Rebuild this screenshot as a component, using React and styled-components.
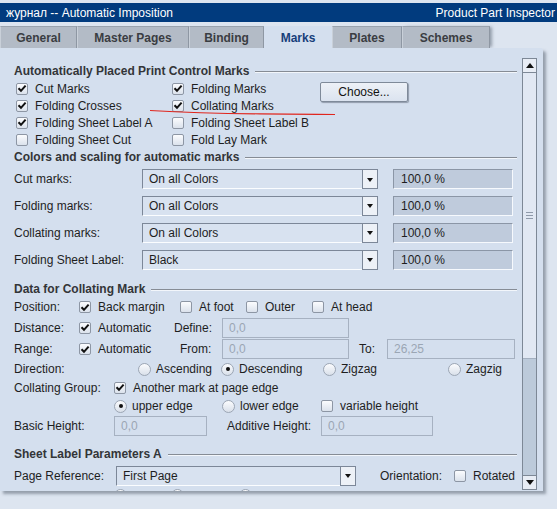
import React from "react";
import styled, { createGlobalStyle } from "styled-components";

const Global = createGlobalStyle`
  html, body { margin: 0; padding: 0; }
  body {
    width: 557px; height: 509px; overflow: hidden;
    background: #dde5f0;
    font-family: "Liberation Sans", Arial, sans-serif;
    font-size: 12px; color: #1e1e1e;
  }
`;

const Frame = styled.div`
  width: 557px; height: 509px; position: relative;
  display: flex; flex-direction: column;
`;

const TitleBar = styled.div`
  margin-top: 3px; height: 19px; background: #013b7e; color: #fff;
  display: flex; align-items: center; justify-content: space-between;
  padding: 0 2px 0 6px; font-size: 12px;
`;

const TabStrip = styled.div`
  margin-top: 4px; height: 22px; display: flex; align-items: stretch;
`;

const Tab = styled.div`
  width: ${p => p.w}px; box-sizing: border-box;
  display: flex; align-items: center; justify-content: center;
  font-weight: bold; font-size: 12px;
  background: ${p => (p.active ? "#d4dfee" : "#b3bbc6")};
  color: ${p => (p.active ? "#173e7a" : "#3a3d42")};
  border-top: 1px solid ${p => (p.active ? "#d4dfee" : "#9aa3ae")};
  border-right: 1px solid ${p => (p.active ? "transparent" : "#8e97a3")};
  border-left: 1px solid ${p => (p.active ? "transparent" : "#c9d0d9")};
  ${p => p.last && "box-shadow: 3px 0 3px -1px rgba(90,100,115,0.55);"}
`;

const Panel = styled.div`
  width: 543px; height: 443px; background: #d4dfee;
  display: flex; border-top-right-radius: 3px;
  box-shadow: 3px 3px 3px rgba(90,100,115,0.55);
  position: relative;
`;

const Content = styled.div`
  flex: 1; overflow: hidden; padding-top: 15px;
  display: flex; flex-direction: column;
`;

const Heading = styled.div`
  height: 16px; flex-shrink: 0;
  margin-top: ${p => p.mt || 0}px; margin-bottom: ${p => p.mb || 0}px;
  padding-left: 14px;
  display: flex; align-items: center; gap: 6px;
  font-weight: bold; color: #333538; font-size: 12px; white-space: nowrap;
  &::after {
    content: ""; flex: 1; height: 1px; background: #868c95;
    box-shadow: 0 1px 0 #f2f6fb;
  }
`;

const Row = styled.div`
  height: ${p => p.h}px; display: flex; align-items: ${p => p.align || "center"};
  padding-left: ${p => p.pl ?? 14}px; white-space: nowrap; flex-shrink: 0;
`;

const Cell = styled.div`
  width: ${p => p.w}px; flex-shrink: 0; display: flex; align-items: center;
  box-sizing: border-box; padding-left: ${p => p.pl || 0}px;
`;

const Label = styled.span`
  color: #1e1e1e;
`;

const Box = styled.span`
  width: 12px; height: 12px; box-sizing: border-box; flex-shrink: 0;
  border: 1px solid #8d96a4; border-radius: 2px;
  background: linear-gradient(#fbfcfe, #dbe2ec);
  display: inline-flex; align-items: center; justify-content: center;
  margin-right: 7px;
`;

const Circle = styled.span`
  width: 13px; height: 13px; box-sizing: border-box; flex-shrink: 0;
  border: 1px solid #9ca6b4; border-radius: 50%;
  background: linear-gradient(#fbfcfe, #d9e0ea);
  display: inline-flex; align-items: center; justify-content: center;
  margin-right: 5px;
  &::after {
    content: ""; width: 4px; height: 4px; border-radius: 50%;
    background: ${p => (p.on ? "#111" : "transparent")};
  }
`;

const Check = ({ on, children }) => (
  <>
    <Box>
      {on && (
        <svg width="10" height="9" viewBox="0 0 10 9">
          <path d="M1.5 4.2 L4 6.8 L8.6 1.6" fill="none" stroke="#111" strokeWidth="2" />
        </svg>
      )}
    </Box>
    <Label>{children}</Label>
  </>
);

const Radio = ({ on, children }) => (
  <>
    <Circle on={on} />
    {children && <Label>{children}</Label>}
  </>
);

const MarksGrid = styled.div`
  display: grid; grid-template-columns: 156px 148px auto;
  grid-auto-rows: 17px; padding-left: 16px; align-items: center; flex-shrink: 0;
`;

const GridItem = styled.div`
  display: flex; align-items: center; white-space: nowrap;
`;

const Button = styled.div`
  grid-column: 3; grid-row: 1 / span 2; align-self: start; margin-top: 2px;
  width: 88px; height: 20px; box-sizing: border-box;
  border: 1px solid #7f8a99; border-radius: 2px;
  background: linear-gradient(#edf1f7, #dbe3ef);
  box-shadow: 1px 1px 1px rgba(80,90,105,0.5);
  display: flex; align-items: center; justify-content: center; color: #111;
`;

const Select = styled.div`
  width: ${p => p.w}px; height: 20px; box-sizing: border-box; flex-shrink: 0;
  border-top: 1px solid #7c8798; border-left: 1px solid #7c8798;
  border-bottom: 1px solid #fbfdff; border-right: 1px solid transparent;
  background: #d8e2f0; display: flex; align-items: center;
  padding-left: 6px; position: relative; color: #1e1e1e;
`;

const Arrow = styled.span`
  position: absolute; right: -1px; top: -1px; width: 16px; height: 20px;
  box-sizing: border-box; border: 1px solid #7c8798; background: #edf1f7;
  display: flex; align-items: center; justify-content: center;
  &::after {
    content: ""; border-left: 3.5px solid transparent; border-right: 3.5px solid transparent;
    border-top: 4px solid #111; margin-top: 1px;
  }
`;

const Percent = styled.div`
  width: 120px; height: 20px; box-sizing: border-box; margin-left: 15px;
  border-top: 1px solid #8b96a6; border-left: 1px solid #8b96a6;
  border-bottom: 1px solid #f6f9fd; border-right: 1px solid #f6f9fd;
  background: #bfcbdc; display: flex; align-items: center; padding-left: 7px;
`;

const Field = styled.div`
  width: ${p => p.w}px; height: 20px; box-sizing: border-box; flex-shrink: 0;
  border: 1px solid #a6b1c1; background: #d4dfee; color: #9ba6b4;
  display: flex; align-items: center; padding-left: 6px;
`;

const Scrollbar = styled.div`
  width: 15px; margin: 10px 6px 1px 5px; flex-shrink: 0;
  display: flex; flex-direction: column; box-sizing: border-box;
  border-left: 1px solid #7d8896; border-right: 1px solid #7d8896;
  background: #bccada;
`;

const ScrollBtn = styled.div`
  height: 15px; box-sizing: border-box; background: #e8edf5;
  border-top: 1px solid #7d8896; border-bottom: 1px solid #7d8896;
  display: flex; align-items: center; justify-content: center; flex-shrink: 0;
  &::after {
    content: ""; border-left: 4px solid transparent; border-right: 4px solid transparent;
    ${p => (p.up ? "border-bottom: 5px solid #111;" : "border-top: 5px solid #111;")}
  }
`;

const Thumb = styled.div`
  height: 285px; background: #e1e8f3; flex-shrink: 0;
  display: flex; flex-direction: column; align-items: center; justify-content: center; gap: 2px;
  border-bottom: 1px solid #a4b0c0;
`;

const Grip = styled.span`
  width: 7px; height: 1px; background: #8f9aaa;
`;

const Track = styled.div`
  flex: 1;
`;

const Annotation = styled.svg`
  position: absolute; left: 0; top: 0; pointer-events: none;
`;

const colorRows = [
  ["Cut marks:", "On all Colors", 26],
  ["Folding marks:", "On all Colors", 27],
  ["Collating marks:", "On all Colors", 27],
  ["Folding Sheet Label:", "Black", 27],
];

export default function App() {
  return (
    <>
      <Global />
      <Frame>
        <TitleBar>
          <span>журнал -- Automatic Imposition</span>
          <span>Product Part Inspector</span>
        </TitleBar>
        <TabStrip>
          <Tab w={77}>General</Tab>
          <Tab w={112}>Master Pages</Tab>
          <Tab w={75}>Binding</Tab>
          <Tab w={68} active>Marks</Tab>
          <Tab w={70}>Plates</Tab>
          <Tab w={88} last>Schemes</Tab>
        </TabStrip>
        <Panel>
          <Content>
            <Heading mb={1}>Automatically Placed Print Control Marks</Heading>
            <MarksGrid>
              <GridItem><Check on>Cut Marks</Check></GridItem>
              <GridItem><Check on>Folding Marks</Check></GridItem>
              <Button>Choose...</Button>
              <GridItem><Check on>Folding Crosses</Check></GridItem>
              <GridItem><Check on>Collating Marks</Check></GridItem>
              <GridItem><Check on>Folding Sheet Label A</Check></GridItem>
              <GridItem><Check>Folding Sheet Label B</Check></GridItem>
              <GridItem />
              <GridItem><Check>Folding Sheet Cut</Check></GridItem>
              <GridItem><Check>Fold Lay Mark</Check></GridItem>
            </MarksGrid>

            <Heading mt={1} mb={1}>Colors and scaling for automatic marks</Heading>
            {colorRows.map(([l, v, h]) => (
              <Row h={h} key={l}>
                <Cell w={128}><Label>{l}</Label></Cell>
                <Select w={236}>{v}<Arrow /></Select>
                <Percent>100,0 %</Percent>
              </Row>
            ))}

            <Heading mt={8}>Data for Collating Mark</Heading>
            <Row h={20}>
              <Cell w={65}><Label>Position:</Label></Cell>
              <Cell w={101}><Check on>Back margin</Check></Cell>
              <Cell w={66}><Check>At foot</Check></Cell>
              <Cell w={66}><Check>Outer</Check></Cell>
              <Cell w={100}><Check>At head</Check></Cell>
            </Row>
            <Row h={21}>
              <Cell w={65}><Label>Distance:</Label></Cell>
              <Cell w={95}><Check on>Automatic</Check></Cell>
              <Cell w={48}><Label>Define:</Label></Cell>
              <Field w={127}>0,0</Field>
            </Row>
            <Row h={22}>
              <Cell w={65}><Label>Range:</Label></Cell>
              <Cell w={101}><Check on>Automatic</Check></Cell>
              <Cell w={42}><Label>From:</Label></Cell>
              <Field w={127}>0,0</Field>
              <Cell w={38} pl={10}><Label>To:</Label></Cell>
              <Field w={128}>26,25</Field>
            </Row>
            <Row h={18}>
              <Cell w={124}><Label>Direction:</Label></Cell>
              <Cell w={83}><Radio>Ascending</Radio></Cell>
              <Cell w={102}><Radio on>Descending</Radio></Cell>
              <Cell w={125}><Radio>Zigzag</Radio></Cell>
              <Cell w={60}><Radio>Zagzig</Radio></Cell>
            </Row>
            <Row h={19}>
              <Cell w={100}><Label>Collating Group:</Label></Cell>
              <Cell w={200}><Check on>Another mark at page edge</Check></Cell>
            </Row>
            <Row h={18} pl={114}>
              <Cell w={108}><Radio on>upper edge</Radio></Cell>
              <Cell w={99}><Radio>lower edge</Radio></Cell>
              <Cell w={120}><Check>variable height</Check></Cell>
            </Row>
            <Row h={22}>
              <Cell w={100}><Label>Basic Height:</Label></Cell>
              <Field w={93}>0,0</Field>
              <Cell w={114} pl={20}><Label>Additive Height:</Label></Cell>
              <Field w={112}>0,0</Field>
            </Row>

            <Heading mt={9}>Sheet Label Parameters A</Heading>
            <Row h={27}>
              <Cell w={102}><Label>Page Reference:</Label></Cell>
              <Select w={240}>First Page<Arrow /></Select>
              <Cell w={98} pl={24}><Label>Orientation:</Label></Cell>
              <Cell w={80}><Check>Rotated</Check></Cell>
            </Row>
            <Row h={18} pl={114} align="flex-start">
              <Cell w={57}><Radio /></Cell>
              <Cell w={68}><Radio /></Cell>
              <Cell w={68}><Radio /></Cell>
            </Row>
          </Content>
          <Scrollbar>
            <ScrollBtn up />
            <Thumb><Grip /><Grip /><Grip /></Thumb>
            <Track />
            <ScrollBtn />
          </Scrollbar>
        </Panel>
        <Annotation width="557" height="509">
          <path d="M150 110.5 Q 200 113.5 260 113.8 T 335 114.5" fill="none" stroke="#e0261e" strokeWidth="1.2" />
        </Annotation>
      </Frame>
    </>
  );
}
